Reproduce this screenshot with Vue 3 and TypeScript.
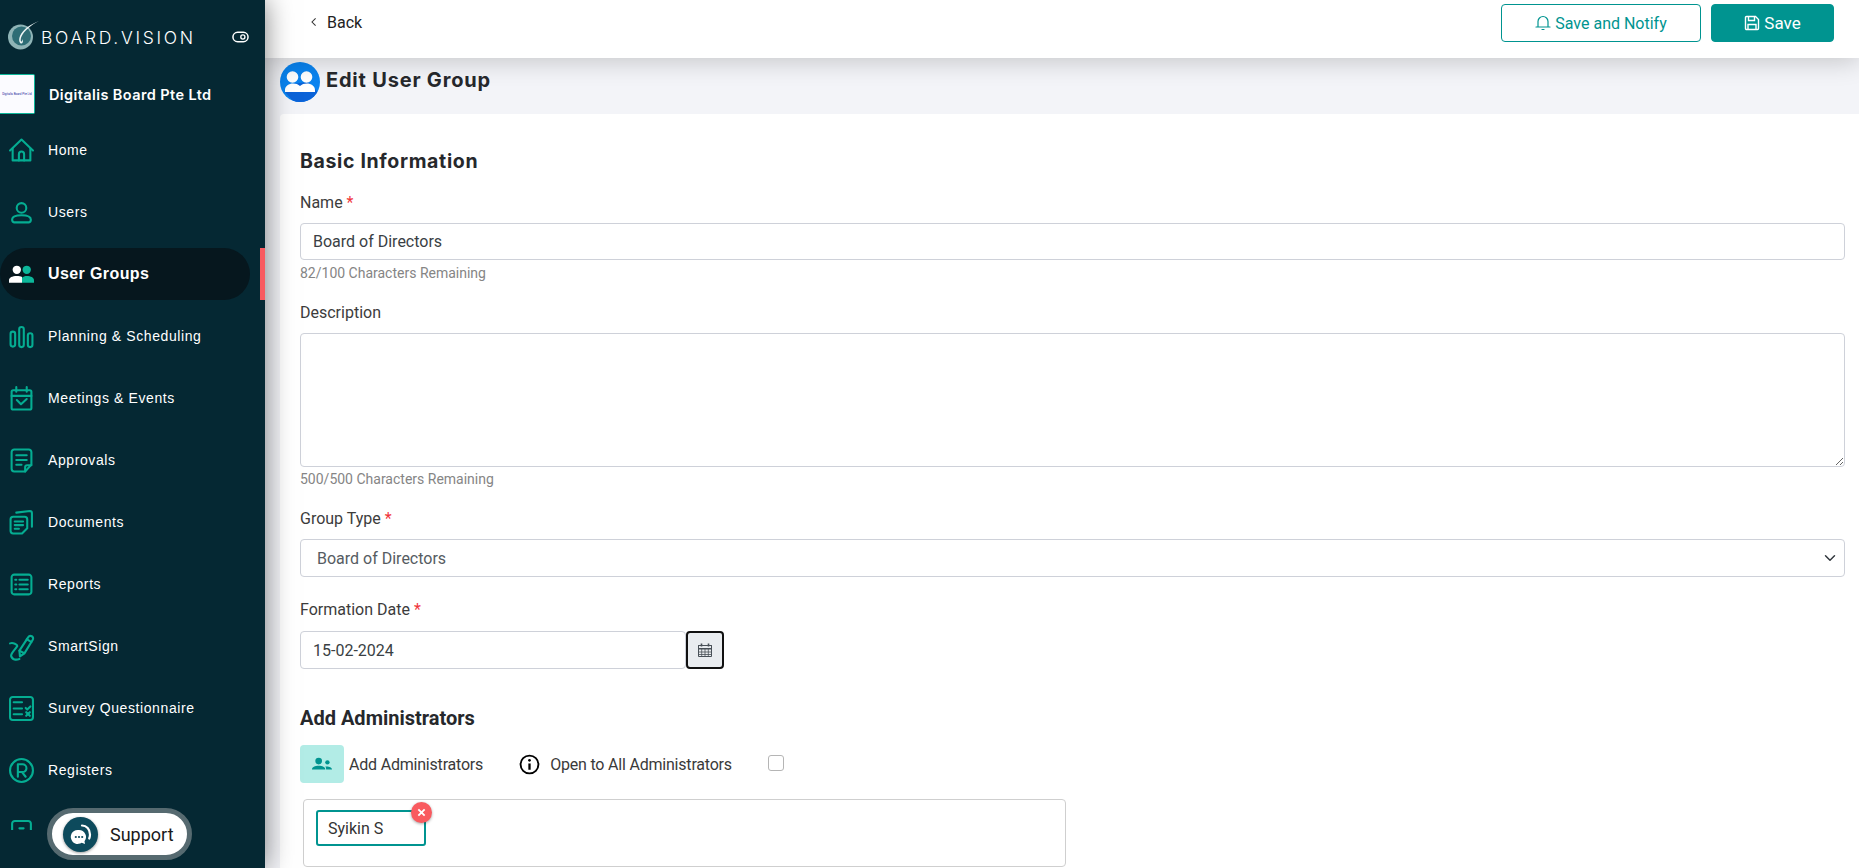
<script setup lang="ts">
import { ref } from 'vue'

interface NavItem {
  label: string
  active?: boolean
  paths: string[]
}

const name = ref('Board of Directors')
const description = ref('')
const formationDate = ref('15-02-2024')
const openToAll = ref(false)

const navItems: NavItem[] = [
  { label: 'Home', paths: ['M1 12 12 1.500 23 12', 'M3.500 10v11.500h17V10', 'M9.500 21.500v-6a2.500 2.500 0 0 1 5 0v6'] },
  { label: 'Users', paths: ['M12 3a4.600 4.600 0 1 1 0 9.200a4.600 4.600 0 0 1 0-9.200z', 'M5 21.500a2.500 2.500 0 0 1-2-2.500c0-3 3-4.300 9-4.300s9 1.300 9 4.300a2.500 2.500 0 0 1-2 2.500z'] },
  { label: 'User Groups', active: true, paths: [] },
  { label: 'Planning & Scheduling', paths: ['M1.500 9.500a2.200 2.200 0 0 1 4.400 0v10a2.200 2.200 0 0 1-4.400 0z', 'M9.800 5a2.200 2.200 0 0 1 4.400 0v15a2.200 2.200 0 0 1-4.400 0z', 'M18.100 11a2.200 2.200 0 0 1 4.400 0v9a2.200 2.200 0 0 1-4.400 0z'] },
  { label: 'Meetings & Events', paths: ['M4 4h16a1.500 1.500 0 0 1 1.500 1.500v15.500a1.500 1.500 0 0 1-1.500 1.500h-16a1.500 1.500 0 0 1-1.500-1.500v-15.500a1.500 1.500 0 0 1 1.500-1.500z', 'M7 1v4.500M17 1v4.500M2.500 9.500h19', 'M7.500 13.500l4 4 5.500-5'] },
  { label: 'Approvals', paths: ['M5 1.500h14a2.500 2.500 0 0 1 2.500 2.500v12l-6 6.500h-10.500a2.500 2.500 0 0 1-2.500-2.500v-16a2.500 2.500 0 0 1 2.500-2.500z', 'M7 7h10M7 11.500h10M7 16h5', 'M15.500 22.500v-4a2 2 0 0 1 2-2h4'] },
  { label: 'Documents', paths: ['M4 6.500h11a2.500 2.500 0 0 1 2.500 2.500v8.500l-5 5h-8.500a2.500 2.500 0 0 1-2.500-2.500v-11a2.500 2.500 0 0 1 2.500-2.500z', 'M5.500 11h8M5.500 14.500h8M5.500 18h4', 'M7 2.500l13-1.500a2 2 0 0 1 2 2v13'] },
  { label: 'Reports', paths: ['M5 2.500h14a2.500 2.500 0 0 1 2.500 2.500v14a2.500 2.500 0 0 1-2.500 2.500h-14a2.500 2.500 0 0 1-2.500-2.500v-14a2.500 2.500 0 0 1 2.500-2.500z', 'M10 7.500h8M10 12h8M10 16.500h8M6 7.500h1M6 12h1M6 16.500h1'] },
  { label: 'SmartSign', paths: ['M10.500 21.500l-.5-5.500 8.500-13a2.500 2.500 0 0 1 4.300 2.600l-8 13z', 'M10 16l4.500 2.500M17 5l4.500 2.700', 'M1 9c3-1 7 1 7 2.500-2 3.500-6 6.500-6 9.500 1 4 5 4 8 3'] },
  { label: 'Survey Questionnaire', paths: ['M3.500 1h17a2.500 2.500 0 0 1 2.500 2.500v17a2.500 2.500 0 0 1-2.500 2.500h-17a2.500 2.500 0 0 1-2.500-2.500v-17a2.500 2.500 0 0 1 2.500-2.500z', 'M4.500 6h8M4.500 12h8M4.500 17.500h8', 'M16 11.500l1.500 1.500 3-3M16.500 15.500l3.500 3.500M20 15.500l-3.500 3.500'] },
  { label: 'Registers', paths: ['M12 1a11 11 0 1 1 0 22a11 11 0 0 1 0-22z', 'M8.500 18v-12h4.500a3.500 3.500 0 0 1 0 7.500h-4.500M12.500 13.500l3.500 4.500'] },
  { label: '', paths: ['M3 24V3.500a2.500 2.500 0 0 1 2.500-2.500h13a2.500 2.500 0 0 1 2.500 2.500V24', 'M10 8h4'] }
]
</script>

<template>
  <div class="shell">
    <aside class="sidebar">
      <div class="brand">
        <svg class="brand-mark" viewBox="0 0 34 34" aria-hidden="true">
          <circle cx="13.500" cy="19" r="12.500" fill="#8fb4b6" />
          <circle cx="14.500" cy="18" r="9.500" fill="#2e6d75" />
          <path d="M32 3C24 6 16 11 13 18c-1.300 3-1 6.500.8 7.500 1.700.6 2.600-1.600 2-4.500-.3 1.800-1 2.800-1.600 2.500-.8-.5-.6-3 .3-5C17 13 24 7 32 3z" fill="#eef6f6" />
        </svg>
        <span class="brand-name">BOARD.VISION</span>
        <svg class="brand-toggle" viewBox="0 0 18 12" aria-hidden="true">
          <rect x="1" y="1" width="16" height="10" rx="5" fill="none" stroke="#fff" stroke-width="1.600" />
          <circle cx="11.500" cy="6" r="2.200" fill="none" stroke="#fff" stroke-width="1.400" />
        </svg>
      </div>

      <div class="company">
        <div class="company-logo"><span>Digitalis Board Pte Ltd</span></div>
        <span class="company-name">Digitalis Board Pte Ltd</span>
      </div>

      <nav class="nav">
        <a v-for="item in navItems" :key="item.label" class="nav-item" :class="{ active: item.active }">
          <svg class="nav-icon" viewBox="0 0 24 24" aria-hidden="true">
            <template v-if="item.active">
              <circle cx="7.500" cy="7.500" r="4" fill="#fff" />
              <path d="M0 20v-2.500c0-2.500 3-4 7.500-4 2 0 3.800 0.300 5 1v5.500z" fill="#fff" />
              <circle cx="17" cy="7.500" r="4" fill="#0cb79a" />
              <path d="M12.500 20v-5c1.200-1 2.800-1.500 4.500-1.500 4 0 7 1.500 7 4v2.500z" fill="#0cb79a" />
            </template>
            <path v-for="d in item.paths" :key="d" :d="d" fill="none" stroke="#05ad92" stroke-width="2" stroke-linecap="round" stroke-linejoin="round" />
          </svg>
          <span v-if="item.label" class="nav-label">{{ item.label }}</span>
          <i v-if="item.active" class="nav-marker"></i>
        </a>
      </nav>

      <button class="support" type="button">
        <span class="support-icon">
          <svg viewBox="0 0 24 24" width="24" height="24" aria-hidden="true">
            <path d="M10 8a7 7 0 0 1 5.500 11.300l0.500 2.700-3.300-1.300A7 7 0 1 1 10 8z" fill="#fff" />
            <circle cx="6.800" cy="15" r="1.100" fill="#0d4a5c" />
            <circle cx="10" cy="15" r="1.100" fill="#0d4a5c" />
            <circle cx="13.200" cy="15" r="1.100" fill="#0d4a5c" />
            <path d="M13 3.500c4.500 0 8 3.500 8 9 0 1.500-0.300 2.800-0.800 4" fill="none" stroke="#fff" stroke-width="2.200" stroke-linecap="round" />
          </svg>
        </span>
        <span class="support-text">Support</span>
      </button>
    </aside>

    <main class="main">
      <header class="topbar">
        <a class="back">
          <svg viewBox="0 0 10 12" width="8" height="10" aria-hidden="true">
            <path d="M7 1.500 2.500 6 7 10.500" fill="none" stroke="#333" stroke-width="1.300" />
          </svg>
          <span>Back</span>
        </a>
        <div class="actions">
          <button class="btn btn-outline" type="button">
            <svg viewBox="0 0 16 16" width="16" height="16" aria-hidden="true">
              <path d="M3 11.500V6.500a5 5 0 0 1 10 0v5M1 12h14M7 14.500h2" fill="none" stroke="#009490" stroke-width="1.200" stroke-linecap="round" />
            </svg>
            Save and Notify
          </button>
          <button class="btn btn-solid" type="button">
            <svg viewBox="0 0 16 16" width="16" height="16" aria-hidden="true">
              <path d="M2.500 1.500h9l3 3v9a1 1 0 0 1-1 1h-11a1 1 0 0 1-1-1v-11a1 1 0 0 1 1-1z" fill="none" stroke="#fff" stroke-width="1.400" />
              <path d="M4.500 2v3.500h6V2M4 14.500v-5h8v5" fill="none" stroke="#fff" stroke-width="1.400" />
            </svg>
            Save
          </button>
        </div>
      </header>

      <div class="title-band">
        <span class="title-icon">
          <svg viewBox="0 0 40 40" width="40" height="40" aria-hidden="true">
            <path d="M5 30 12 22l16-2 12 12A20 20 0 0 1 12 38z" fill="#0c63d8" />
            <circle cx="12.500" cy="15" r="5.800" fill="#fff" />
            <circle cx="26.500" cy="15" r="5.800" fill="#fff" />
            <path d="M5 30v-2c0-4 4-6.500 8-6.500 2.800 0 5.300 0.800 7 2.500 1.700-1.700 4.200-2.500 7-2.500 4 0 8 2.500 8 6.500v2z" fill="#fff" />
          </svg>
        </span>
        <h1>Edit User Group</h1>
      </div>

      <section class="card">
        <h2 class="section-title">Basic Information</h2>

        <div class="field">
          <label>Name <em>*</em></label>
          <input v-model="name" class="control" type="text" />
          <small>82/100 Characters Remaining</small>
        </div>

        <div class="field">
          <label>Description</label>
          <textarea v-model="description" class="control area"></textarea>
          <small class="area-hint">500/500 Characters Remaining</small>
        </div>

        <div class="field">
          <label>Group Type <em>*</em></label>
          <select class="control select">
            <option>Board of Directors</option>
          </select>
        </div>

        <div class="field date-field">
          <label>Formation Date <em>*</em></label>
          <div class="date-row">
            <input v-model="formationDate" class="control" type="text" />
            <button class="date-btn" type="button" aria-label="Pick date">
              <svg viewBox="0 0 16 16" width="16" height="16" aria-hidden="true">
                <path d="M1.500 3.500h13v11h-13zM1.500 3.500h13v3h-13z" fill="#e9ecef" stroke="#495057" stroke-width="1" />
                <path d="M1.500 6h13v1.500h-13z" fill="#495057" />
                <path d="M1.500 10h13M1.500 12.500h13M4.700 7v7.500M8 7v7.500M11.300 7v7.500" stroke="#495057" stroke-width=".8" />
                <path d="M4.500 1.500v3M11.500 1.500v3" stroke="#495057" stroke-width="1.600" />
              </svg>
            </button>
          </div>
        </div>

        <h3 class="sub-title">Add Administrators</h3>

        <div class="admin-row">
          <button class="admin-add" type="button" aria-label="Add Administrators">
            <svg viewBox="0 0 24 16" width="20" height="14" aria-hidden="true">
              <circle cx="8" cy="4.500" r="4" fill="#009490" />
              <circle cx="18.500" cy="6" r="2.600" fill="#009490" />
              <path d="M0 14.500c0-3 3.500-4.500 8-4.500s8 1.500 8 4.500zM17 14.500c0-1.500-.3-2.500-1-3.500 3.500-.5 8 .5 8 3.500z" fill="#009490" />
            </svg>
          </button>
          <span class="admin-label">Add Administrators</span>
          <svg class="info" viewBox="0 0 20 20" width="21" height="21" aria-hidden="true">
            <circle cx="10" cy="10" r="8.500" fill="none" stroke="#000" stroke-width="1.800" />
            <circle cx="10" cy="6" r="1.300" fill="#000" />
            <path d="M10 9v6" stroke="#000" stroke-width="2.200" />
          </svg>
          <span class="open-label">Open to All Administrators</span>
          <input v-model="openToAll" class="check" type="checkbox" />
        </div>

        <div class="chips">
          <div class="chip">
            <span>Syikin S</span>
            <span class="chip-close">
              <svg viewBox="0 0 10 10" width="9" height="9" aria-hidden="true">
                <path d="M1.500 1.500l7 7M8.500 1.500l-7 7" stroke="#fff" stroke-width="2" />
              </svg>
            </span>
          </div>
        </div>
      </section>
    </main>
  </div>
</template>

<style>
html, body { margin: 0; height: 100%; overflow: hidden; background: #fff; }
</style>

<style scoped>
* { box-sizing: border-box; }

.shell {
  display: flex;
  width: 1859px;
  height: 868px;
  overflow: hidden;
  font-family: Roboto, "Liberation Sans", Arial, sans-serif;
  color: #333;
  background: #f3f4f8;
}

.sidebar {
  position: relative;
  z-index: 3;
  flex: 0 0 265px;
  width: 265px;
  height: 868px;
  background: #052833;
  box-shadow: 0 0 26px rgba(0, 0, 0, .5);
  display: flex;
  flex-direction: column;
}

.brand {
  display: flex;
  align-items: center;
  height: 74px;
  padding: 0 0 0 7px;
  flex: none;
}
.brand-mark { width: 34px; height: 34px; margin-top: -4px; flex: none; }
.brand-name {
  color: #fff;
  font-family: Inter, "Open Sans", sans-serif;
  font-weight: 300;
  font-size: 17.500px;
  letter-spacing: 2.700px;
  white-space: nowrap;
}
.brand-toggle { width: 17px; height: 12px; margin-left: 36px; flex: none; }

.company {
  display: flex;
  align-items: center;
  height: 40px;
  flex: none;
}
.company-logo {
  width: 35px;
  height: 40px;
  background: #fbfbff;
  border: 1px solid #0cb79a;
  border-left: 0;
  border-radius: 0 2px 2px 0;
  display: flex;
  align-items: center;
  justify-content: center;
  overflow: hidden;
}
.company-logo span {
  font-size: 3px;
  color: #2a2aa0;
  white-space: nowrap;
}
.company-name {
  margin-left: 14px;
  color: #fff;
  font-family: Inter, "Open Sans", sans-serif;
  font-size: 14.500px;
  font-weight: 600;
  letter-spacing: .4px;
  white-space: nowrap;
}

.nav {
  flex: none;
  height: 716px;
  padding-top: 10px;
  overflow: hidden;
}
.nav-item {
  position: relative;
  display: flex;
  align-items: center;
  height: 52px;
  margin: 0 0 10px;
  padding-left: 9px;
  color: #fff;
}
.nav-item.active {
  width: 250px;
  background: #06171e;
  border-radius: 26px;
}
.nav-icon { width: 25px; height: 25px; flex: none; overflow: visible; }
.nav-label {
  margin-left: 14px;
  font-family: "Liberation Sans", Arial, sans-serif;
  font-size: 14px;
  letter-spacing: .6px;
  white-space: nowrap;
}
.nav-item.active .nav-label {
  font-weight: 700;
  font-size: 16px;
  letter-spacing: .4px;
}
.nav-marker {
  position: absolute;
  top: 0;
  right: -15px;
  width: 5px;
  height: 52px;
  background: #f95a5f;
}

.support {
  position: absolute;
  left: 47px;
  top: 808px;
  width: 145px;
  height: 52px;
  padding: 0 0 0 11px;
  display: flex;
  align-items: center;
  background: #fff;
  border: 5px solid #566a70;
  border-radius: 26px;
  font-family: Roboto, sans-serif;
}
.support-icon {
  width: 35px;
  height: 35px;
  border-radius: 50%;
  background: #0d4a5c;
  display: flex;
  align-items: center;
  justify-content: center;
  box-shadow: 0 1px 3px rgba(0, 0, 0, .4);
  flex: none;
}
.support-text { margin-left: 12px; font-size: 18px; color: #1a1a1a; }

.main {
  flex: 1;
  min-width: 0;
  display: flex;
  flex-direction: column;
}

.topbar {
  position: relative;
  z-index: 2;
  flex: none;
  height: 58px;
  background: #fff;
  box-shadow: 0 3px 26px rgba(0, 0, 0, .2);
  display: flex;
  align-items: flex-start;
  justify-content: space-between;
  padding: 4px 25px 0 45px;
}
.back {
  display: flex;
  align-items: center;
  gap: 9px;
  height: 36px;
  font-size: 16px;
  color: #222;
}
.actions { display: flex; gap: 10px; }
.btn {
  height: 38px;
  border-radius: 4px;
  font-family: Roboto, sans-serif;
  font-size: 16px;
  display: flex;
  align-items: center;
  justify-content: center;
  gap: 4px;
  cursor: pointer;
}
.btn-outline { width: 200px; background: #fff; color: #009490; border: 1px solid #009490; }
.btn-solid { width: 123px; background: #009490; color: #fff; border: 1px solid #009490; font-size: 17px; }

.title-band {
  flex: none;
  height: 56px;
  display: flex;
  align-items: flex-start;
  padding: 4px 0 0 15px;
}
.title-icon {
  width: 40px;
  height: 40px;
  border-radius: 50%;
  background: #0a84f0;
  overflow: hidden;
  flex: none;
}
.title-band h1 {
  margin: 6px 0 0 6px;
  font-family: Inter, "Open Sans", sans-serif;
  font-size: 20px;
  font-weight: 700;
  letter-spacing: .8px;
  color: #26282c;
}

.card {
  flex: 1;
  margin-left: 15px;
  padding: 35px 14px 0 20px;
  background: #fff;
  border-radius: 4px 0 0 0;
}
.section-title {
  margin: 0 0 20px;
  height: 24px;
  line-height: 24px;
  font-family: Inter, "Open Sans", sans-serif;
  font-size: 19.500px;
  font-weight: 700;
  letter-spacing: .65px;
  color: #26282c;
}

.field { display: flex; flex-direction: column; margin-bottom: 23px; }
.field label {
  height: 20px;
  line-height: 20px;
  margin-bottom: 10px;
  font-size: 16px;
  color: #3c3c3c;
}
.field em { font-style: normal; color: #f0353b; }
.field small {
  height: 14px;
  line-height: 14px;
  margin-top: 6px;
  font-size: 14px;
  color: #858585;
}
.field .area-hint { margin-top: 5px; }

.control {
  width: 100%;
  height: 37px;
  padding: 0 12px;
  background: #fff;
  border: 1px solid #ced1d9;
  border-radius: 4px;
  font-family: Roboto, sans-serif;
  font-size: 16px;
  color: #3a3f44;
  outline: none;
}
.area { height: 134px; display: block; resize: vertical; }
.select {
  height: 38px;
  padding-left: 16px;
  color: #565c62;
  appearance: none;
  background: #fff url("data:image/svg+xml,%3csvg xmlns='http://www.w3.org/2000/svg' viewBox='0 0 16 16'%3e%3cpath fill='none' stroke='%23343a40' stroke-linecap='round' stroke-linejoin='round' stroke-width='2' d='M2 5l6 6 6-6'/%3e%3c/svg%3e") no-repeat right 6px center / 16px 12px;
}

.date-field { margin-bottom: 0; }
.date-field label { margin-bottom: 11px; }
.date-row { display: flex; width: 424px; }
.date-row .control { width: 386px; height: 38px; flex: none; }
.date-btn {
  width: 38px;
  height: 38px;
  padding: 0;
  background: #e9ecef;
  border: 2px solid #111;
  border-radius: 4px;
  display: flex;
  align-items: center;
  justify-content: center;
  flex: none;
}

.sub-title {
  margin: 38px 0 16px;
  height: 22px;
  line-height: 22px;
  font-family: Roboto, sans-serif;
  font-size: 20px;
  font-weight: 700;
  color: #26282c;
}

.admin-row {
  display: flex;
  align-items: center;
  height: 38px;
  font-size: 16px;
  letter-spacing: -.2px;
  color: #3a3a3a;
}
.admin-add {
  width: 44px;
  height: 38px;
  padding: 0;
  background: #b2ece6;
  border: 0;
  border-radius: 4px;
  display: flex;
  align-items: center;
  justify-content: center;
  flex: none;
}
.admin-label { margin-left: 5px; }
.info { margin-left: 36px; flex: none; }
.open-label { margin-left: 10px; }
.check {
  width: 16px;
  height: 16px;
  margin: -2px 0 0 36px;
  appearance: none;
  background: #fff;
  border: 1px solid #b5b5b5;
  border-radius: 3px;
}

.chips {
  width: 763px;
  height: 68px;
  margin: 16px 0 0 3px;
  padding: 10px 12px;
  background: #fff;
  border: 1px solid #cfcfcf;
  border-radius: 4px;
}
.chip {
  position: relative;
  width: 110px;
  height: 36px;
  padding-left: 10px;
  display: flex;
  align-items: center;
  border: 2px solid #009490;
  border-radius: 3px;
  font-size: 16px;
  color: #333;
}
.chip-close {
  position: absolute;
  top: -10px;
  right: -8px;
  width: 21px;
  height: 21px;
  border-radius: 50%;
  background: #f95a5f;
  display: flex;
  align-items: center;
  justify-content: center;
  box-shadow: 0 1px 3px rgba(0, 0, 0, .35);
}
</style>
